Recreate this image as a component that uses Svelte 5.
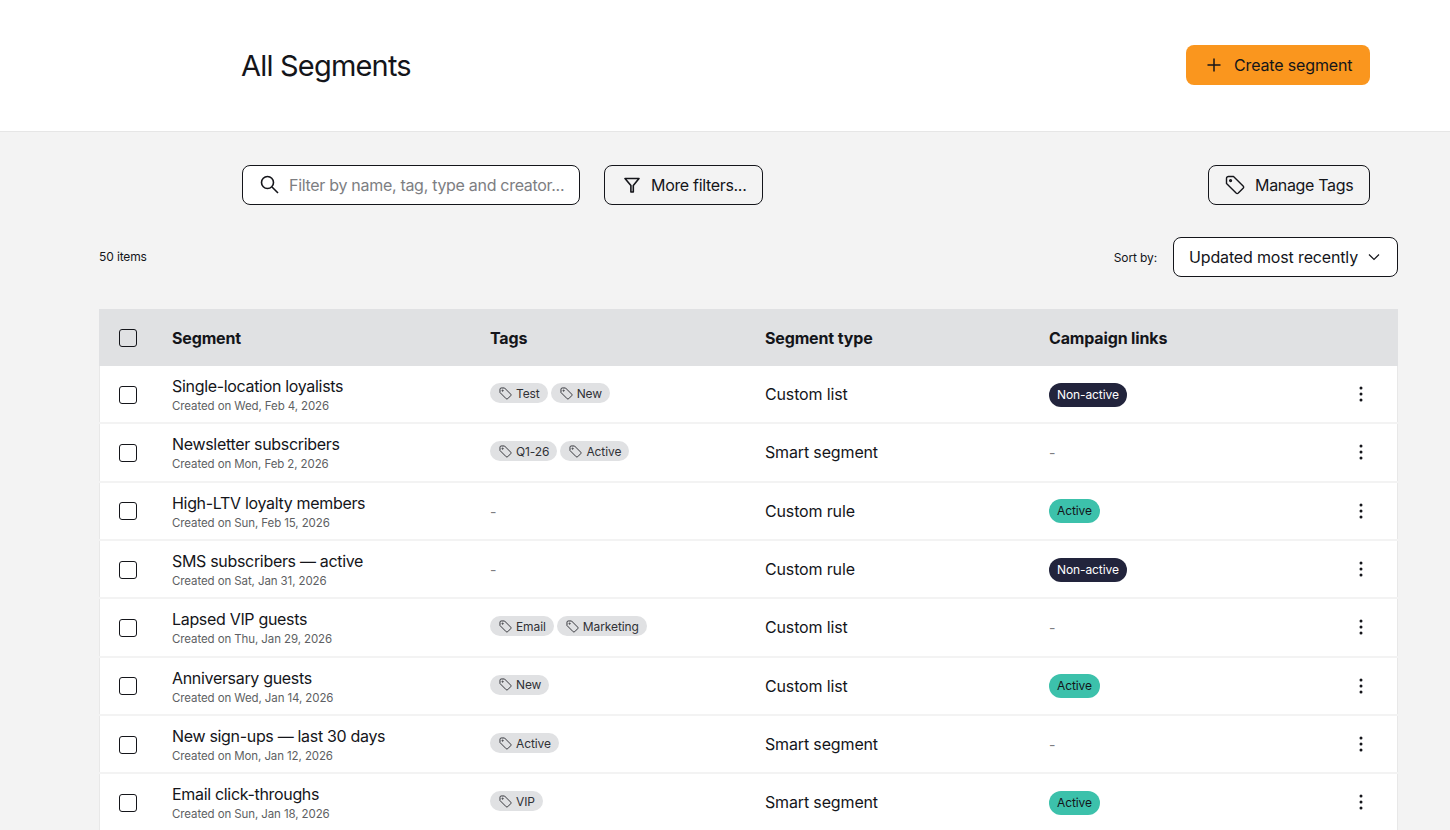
<script>
  const rows = [
    { name: 'Single-location loyalists', created: 'Wed, Feb 4, 2026', tags: ['Test', 'New'], type: 'Custom list', link: 'Non-active' },
    { name: 'Newsletter subscribers', created: 'Mon, Feb 2, 2026', tags: ['Q1-26', 'Active'], type: 'Smart segment', link: null },
    { name: 'High-LTV loyalty members', created: 'Sun, Feb 15, 2026', tags: [], type: 'Custom rule', link: 'Active' },
    { name: 'SMS subscribers — active', created: 'Sat, Jan 31, 2026', tags: [], type: 'Custom rule', link: 'Non-active' },
    { name: 'Lapsed VIP guests', created: 'Thu, Jan 29, 2026', tags: ['Email', 'Marketing'], type: 'Custom list', link: null },
    { name: 'Anniversary guests', created: 'Wed, Jan 14, 2026', tags: ['New'], type: 'Custom list', link: 'Active' },
    { name: 'New sign-ups — last 30 days', created: 'Mon, Jan 12, 2026', tags: ['Active'], type: 'Smart segment', link: null },
    { name: 'Email click-throughs', created: 'Sun, Jan 18, 2026', tags: ['VIP'], type: 'Smart segment', link: 'Active' }
  ];
</script>

<div class="page">
  <header class="top">
    <h1>All Segments</h1>
    <button class="create" type="button">
      <svg width="16" height="16" viewBox="0 0 16 16" fill="none" stroke="currentColor" stroke-width="1.5"><path d="M8 1.5v13M1.5 8h13" /></svg>
      Create segment
    </button>
  </header>

  <section class="filters">
    <label class="search">
      <svg width="20" height="20" viewBox="0 0 20 20" fill="none" stroke="currentColor" stroke-width="1.6"><circle cx="7.5" cy="7.5" r="6" /><path d="M12 12l6 6" /></svg>
      <input placeholder="Filter by name, tag, type and creator..." />
    </label>
    <button class="outline more" type="button">
      <svg width="16" height="16" viewBox="0 0 16 16" fill="none" stroke="currentColor" stroke-width="1.6"><path d="M1 1.5h14L9.3 8.6V15H6.9V8.6z" stroke-linejoin="round" /></svg>
      More filters...
    </button>
    <button class="outline manage" type="button">
      <svg width="20" height="20" viewBox="0 0 20 20" fill="none" stroke="currentColor" stroke-width="1.4" stroke-linejoin="round"><path d="M1.5 3.5a2 2 0 0 1 2-2h5l9.6 9.6a1.6 1.6 0 0 1 0 2.2l-4.8 4.8a1.6 1.6 0 0 1-2.2 0L1.5 8.5z" /><circle cx="5.6" cy="5.6" r="0.9" /></svg>
      Manage Tags
    </button>
  </section>

  <section class="list-head">
    <span class="count">50 items</span>
    <div class="sort">
      <span>Sort by:</span>
      <button class="select" type="button">
        Updated most recently
        <svg width="12" height="8" viewBox="0 0 12 8" fill="none" stroke="currentColor" stroke-width="1.2"><path d="M1 1.5l5 5 5-5" /></svg>
      </button>
    </div>
  </section>

  <section class="table">
    <div class="row head">
      <span class="check"></span>
      <span>Segment</span>
      <span>Tags</span>
      <span>Segment type</span>
      <span>Campaign links</span>
      <span></span>
    </div>
    <div class="rows">
      {#each rows as row}
        <div class="row">
          <span class="check"></span>
          <div class="name">
            <p>{row.name}</p>
            <small>Created on {row.created}</small>
          </div>
          <div class="tags">
            {#each row.tags as tag}
              <span class="tag">
                <svg width="13" height="13" viewBox="0 0 20 20" fill="none" stroke="currentColor" stroke-width="1.5" stroke-linejoin="round"><path d="M1.5 3.5a2 2 0 0 1 2-2h5l9.6 9.6a1.6 1.6 0 0 1 0 2.2l-4.8 4.8a1.6 1.6 0 0 1-2.2 0L1.5 8.5z" /><circle cx="5.6" cy="5.6" r="0.9" /></svg>
                {tag}
              </span>
            {:else}
              <span class="none">-</span>
            {/each}
          </div>
          <span class="type">{row.type}</span>
          <div class="link">
            {#if row.link === 'Active'}
              <span class="pill active">Active</span>
            {:else if row.link}
              <span class="pill off">{row.link}</span>
            {:else}
              <span class="none">-</span>
            {/if}
          </div>
          <svg class="dots" width="4" height="16" viewBox="0 0 4 16" fill="#14151a"><circle cx="2" cy="2" r="1.5" /><circle cx="2" cy="8" r="1.5" /><circle cx="2" cy="14" r="1.5" /></svg>
        </div>
      {/each}
    </div>
  </section>
</div>

<style>
  :global(body) {
    overflow: hidden;
    background: #f3f3f3;
  }

  .page {
    height: 830px;
    overflow: hidden;
    font-family: Inter, 'Noto Sans', sans-serif;
    color: #14151a;
  }

  button,
  input {
    font: inherit;
    color: inherit;
  }

  .top {
    display: flex;
    align-items: center;
    justify-content: space-between;
    height: 132px;
    padding: 0 80px 1px 241px;
    box-sizing: border-box;
    background: #fff;
    border-bottom: 1px solid #e6e6e6;
  }

  h1 {
    margin: 0;
    font-size: 29px;
    font-weight: 400;
    letter-spacing: -0.8px;
  }

  .create {
    display: flex;
    align-items: center;
    gap: 12px;
    width: 184px;
    height: 40px;
    padding: 0 0 0 20px;
    border: 0;
    border-radius: 8px;
    background: #fa961e;
    font-size: 16px;
    letter-spacing: -0.15px;
    white-space: nowrap;
  }

  .filters {
    display: flex;
    align-items: center;
    gap: 24px;
    margin-top: 33px;
    padding: 0 80px 0 242px;
  }

  .search {
    display: flex;
    align-items: center;
    gap: 9px;
    box-sizing: border-box;
    width: 338px;
    height: 40px;
    padding: 0 10px 0 17px;
    border: 1px solid #14151a;
    border-radius: 8px;
    background: #fff;
  }

  .search input {
    flex: 1;
    min-width: 0;
    padding: 0;
    border: 0;
    outline: 0;
    background: none;
    font-size: 16px;
    letter-spacing: -0.3px;
  }

  .search input::placeholder {
    color: #7d7e82;
    opacity: 1;
  }

  .outline {
    display: flex;
    align-items: center;
    box-sizing: border-box;
    height: 40px;
    border: 1px solid #14151a;
    border-radius: 8px;
    background: #f3f3f3;
    font-size: 16px;
    letter-spacing: -0.32px;
    white-space: nowrap;
  }

  .more {
    gap: 11px;
    width: 159px;
    padding: 0 0 0 19px;
  }

  .manage {
    gap: 10px;
    width: 162px;
    margin-left: auto;
    padding: 0 0 0 16px;
  }

  .list-head {
    display: flex;
    align-items: center;
    justify-content: space-between;
    margin-top: 32px;
    padding: 0 52px 0 99px;
  }

  .count {
    margin-bottom: 2px;
  }

  .count,
  .sort span {
    font-size: 12px;
    letter-spacing: -0.12px;
  }

  .sort {
    display: flex;
    align-items: center;
    gap: 16px;
  }

  .select {
    display: flex;
    align-items: center;
    justify-content: space-between;
    box-sizing: border-box;
    width: 225px;
    height: 40px;
    padding: 0 17px 0 15px;
    border: 1px solid #14151a;
    border-radius: 8px;
    background: #fff;
    font-size: 16px;
    letter-spacing: -0.15px;
    white-space: nowrap;
  }

  .table {
    margin: 32px 52px 0 99px;
  }

  .rows {
    display: grid;
    gap: 2px;
  }

  .row {
    display: grid;
    grid-template-columns: 53px 318px 275px 284px 1fr 20px;
    align-items: center;
    height: 56.33px;
    padding-left: 19px;
    padding-right: 26px;
    box-sizing: border-box;
    background: #fff;
    border-right: 1px solid #e8e8e8;
    border-left: 1px solid #e8e8e8;
    font-size: 16px;
    letter-spacing: -0.15px;
  }

  .head {
    height: 57px;
    padding-left: 20px;
    padding-right: 27px;
    background: #e0e1e3;
    border: 0;
    font-weight: 700;
  }

  .check {
    display: block;
    box-sizing: border-box;
    width: 18px;
    height: 18px;
    margin-top: 1px;
    border: 1.5px solid #14151a;
    border-radius: 3px;
    background: #fff;
  }

  .head .check {
    margin-top: 0;
    background: none;
  }

  .name {
    padding-top: 2px;
  }

  .name p {
    margin: 0;
    line-height: 20px;
    letter-spacing: -0.32px;
  }

  .name small {
    display: block;
    margin-top: 2px;
    font-size: 11.5px;
    line-height: 16px;
    letter-spacing: -0.1px;
    color: #5e5f63;
  }

  .tags {
    display: flex;
    gap: 3px;
    margin-bottom: 2px;
  }

  .tags .none {
    margin-top: 3px;
  }

  .tag {
    display: inline-flex;
    align-items: center;
    gap: 4px;
    height: 20px;
    padding: 0 8px 0 9px;
    border-radius: 10px;
    background: #e0e1e3;
    font-size: 12px;
    letter-spacing: -0.1px;
    color: #303136;
  }

  .none {
    color: #7d7e82;
    font-size: 14px;
  }

  .link {
    display: flex;
    align-items: center;
  }

  .pill {
    display: inline-block;
    height: 24px;
    margin-top: 1px;
    padding: 0 8px;
    border-radius: 12px;
    font-size: 12px;
    line-height: 24px;
    letter-spacing: -0.1px;
  }

  .off {
    background: #22243c;
    color: #fff;
  }

  .active {
    background: #3cc1ab;
    color: #14151a;
  }

  .dots {
    justify-self: center;
  }
</style>
